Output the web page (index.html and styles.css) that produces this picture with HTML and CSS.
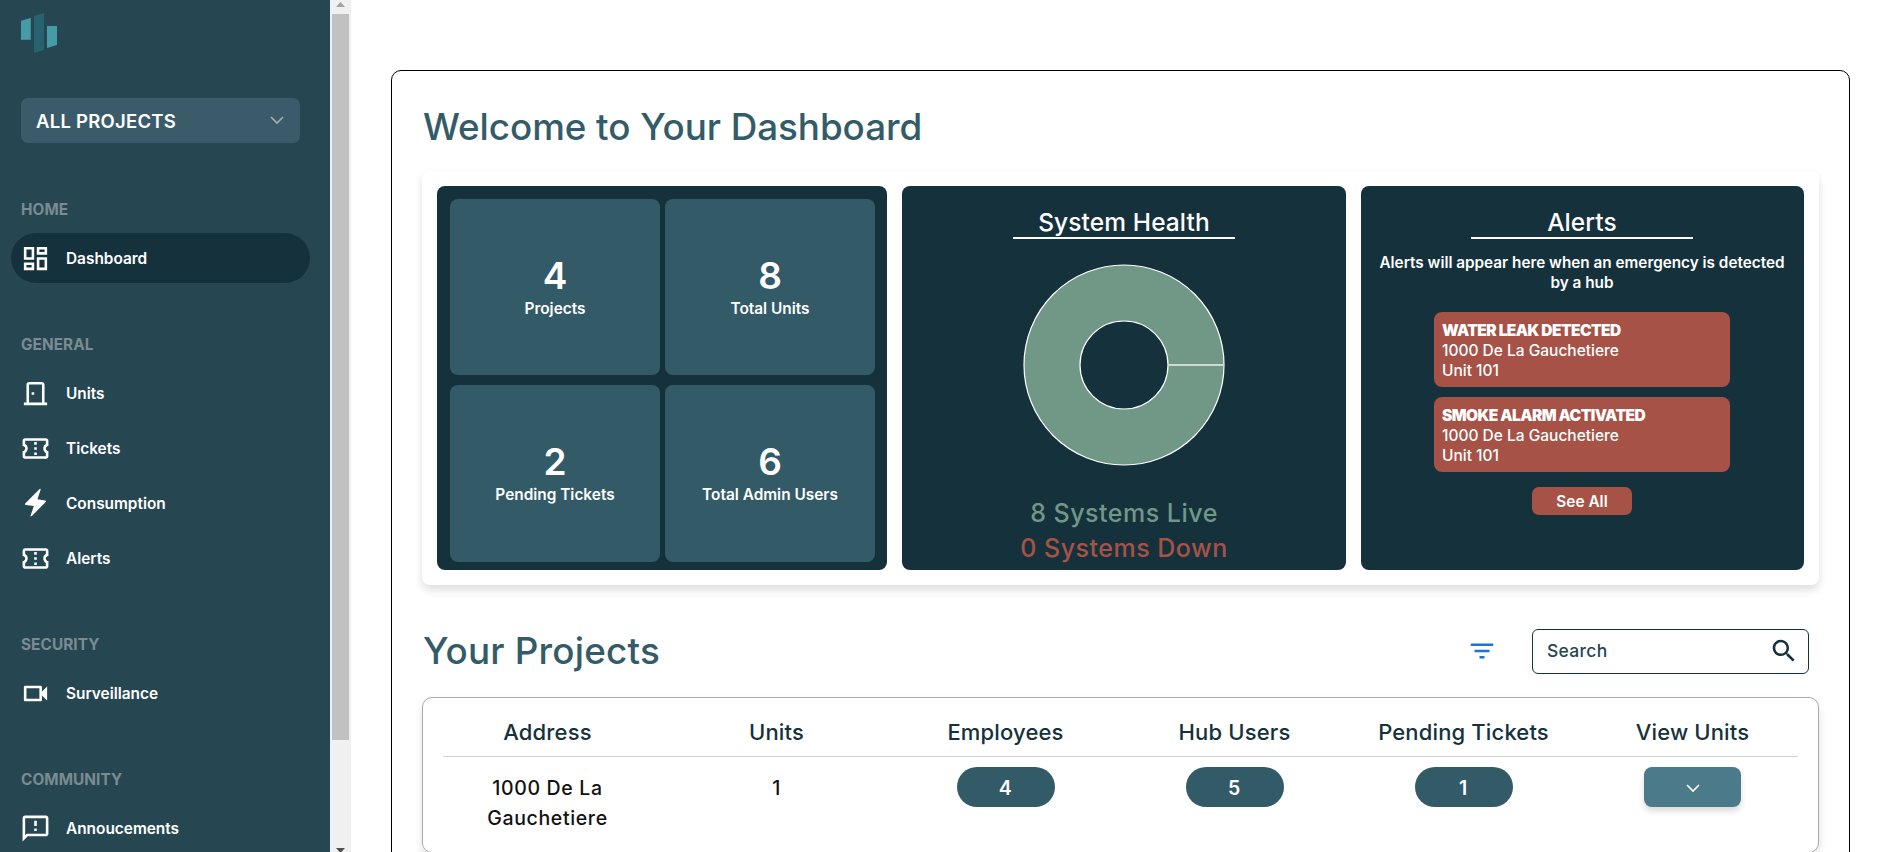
FILE: index.html
```html
<!DOCTYPE html>
<html lang="en">
<head>
<meta charset="utf-8">
<title>Dashboard</title>
<link rel="stylesheet" href="styles.css">
</head>
<body>
<div class="app">
  <aside class="sidebar">
    <svg class="logo" width="36" height="40" viewBox="0 0 36 40">
      <path fill="#469ca6" d="M0 7.7 9.8 5v21.7H0z"/>
      <path fill="#27626f" d="M13 3 23 0v36.7L13 40z"/>
      <path fill="#469ca6" d="M26 13h10v19l-10 3z"/>
    </svg>
    <div class="select">
      <span>ALL PROJECTS</span>
      <svg width="14" height="9" viewBox="0 0 14 9"><path d="M1 1l6 6 6-6" fill="none" stroke="#a3adb5" stroke-width="1.7"/></svg>
    </div>
    <nav class="nav">
      <section class="group">
        <h4>HOME</h4>
        <a class="item active"><svg viewBox="0 0 24 24"><path d="M19 5v2h-4V5h4M9 5v6H5V5h4m10 8v6h-4v-6h4M9 17v2H5v-2h4M21 3h-8v6h8V3zM11 3H3v10h8V3zm10 8h-8v10h8V11zm-10 4H3v6h8v-6z"/></svg>Dashboard</a>
      </section>
      <section class="group">
        <h4>GENERAL</h4>
        <a class="item"><svg viewBox="0 0 24 24"><path d="M19 19V5c0-1.1-.9-2-2-2H7c-1.1 0-2 .9-2 2v14H3v2h18v-2h-2zm-2 0H7V5h10v14zm-8-8h2v2H9z"/></svg>Units</a>
        <a class="item"><svg viewBox="0 0 24 24"><path d="M22 10V6c0-1.11-.9-2-2-2H4c-1.1 0-1.99.89-1.99 2v4c1.1 0 1.99.9 1.99 2s-.89 2-2 2v4c0 1.1.9 2 2 2h16c1.1 0 2-.9 2-2v-4c-1.1 0-2-.9-2-2s.9-2 2-2zm-2-1.46c-1.19.69-2 1.99-2 3.46s.81 2.77 2 3.46V18H4v-2.54c1.19-.69 2-1.99 2-3.46 0-1.48-.8-2.77-1.99-3.46L4 6h16v2.54zM11 15h2v2h-2zm0-4h2v2h-2zm0-4h2v2h-2z"/></svg>Tickets</a>
        <a class="item"><svg viewBox="0 0 24 24"><path d="M15.2 .8Q16.300 .300 15.900 1.500L13.500 8.700 19.500 9.700Q20.600 10 19.900 10.900L9.200 21.600Q7.800 22.600 8.300 21L10.700 14 4.500 13.200Q3.300 12.800 4.200 11.800z"/></svg>Consumption</a>
        <a class="item"><svg viewBox="0 0 24 24"><path d="M22 10V6c0-1.11-.9-2-2-2H4c-1.1 0-1.99.89-1.99 2v4c1.1 0 1.99.9 1.99 2s-.89 2-2 2v4c0 1.1.9 2 2 2h16c1.1 0 2-.9 2-2v-4c-1.1 0-2-.9-2-2s.9-2 2-2zm-2-1.46c-1.19.69-2 1.99-2 3.46s.81 2.77 2 3.46V18H4v-2.54c1.19-.69 2-1.99 2-3.46 0-1.48-.8-2.77-1.99-3.46L4 6h16v2.54zM11 15h2v2h-2zm0-4h2v2h-2zm0-4h2v2h-2z"/></svg>Alerts</a>
      </section>
      <section class="group">
        <h4>SECURITY</h4>
        <a class="item"><svg viewBox="0 0 24 24"><path d="M15 8v8H5V8h10m1-2H4c-.55 0-1 .45-1 1v10c0 .55.45 1 1 1h12c.55 0 1-.45 1-1v-3.5l4 4v-11l-4 4V7c0-.55-.45-1-1-1z"/></svg>Surveillance</a>
      </section>
      <section class="group">
        <h4>COMMUNITY</h4>
        <a class="item"><svg viewBox="0 0 24 24"><path d="M20 2H4c-1.1 0-1.99.9-1.99 2L2 22l4-4h14c1.1 0 2-.9 2-2V4c0-1.1-.9-2-2-2zm0 14H5.17L4 17.17V4h16v12zm-9-4h2v2h-2zm0-6h2v4h-2z"/></svg>Annoucements</a>
      </section>
    </nav>
  </aside>
  <div class="scrollbar">
    <svg width="9" height="5" viewBox="0 0 9 5"><path d="M4.5 0 9 5H0z" fill="#a3a3a3"/></svg>
    <div class="thumb"></div>
    <svg width="9" height="5" viewBox="0 0 9 5"><path d="M0 0h9L4.5 5z" fill="#505050"/></svg>
  </div>
  <main class="main">
    <div class="page">
      <h1>Welcome to Your Dashboard</h1>
      <div class="overview">
        <div class="panel tiles">
          <div class="tile"><b>4</b><span>Projects</span></div>
          <div class="tile"><b>8</b><span>Total Units</span></div>
          <div class="tile"><b>2</b><span>Pending Tickets</span></div>
          <div class="tile"><b>6</b><span>Total Admin Users</span></div>
        </div>
        <div class="panel">
          <h2>System Health</h2>
          <svg class="donut" width="202" height="202" viewBox="-101 -101 202 202">
            <circle r="72" fill="none" stroke="#719887" stroke-width="56"/>
            <circle r="100" fill="none" stroke="#fff" stroke-width="1.2"/>
            <circle r="44" fill="none" stroke="#fff" stroke-width="1.2"/>
            <path d="M44 0h56" stroke="#cfdcd6" stroke-width="2"/>
          </svg>
          <p class="stat live">8 Systems Live</p>
          <p class="stat dead">0 Systems Down</p>
        </div>
        <div class="panel alerts">
          <h2>Alerts</h2>
          <p class="note">Alerts will appear here when an emergency is detected by a hub</p>
          <div class="alert"><strong>WATER LEAK DETECTED</strong><span>1000 De La Gauchetiere</span><span>Unit 101</span></div>
          <div class="alert"><strong>SMOKE ALARM ACTIVATED</strong><span>1000 De La Gauchetiere</span><span>Unit 101</span></div>
          <div class="see-all">See All</div>
        </div>
      </div>
      <div class="projects-bar">
        <h1>Your Projects</h1>
        <svg class="filter" width="30" height="30" viewBox="0 0 24 24"><path fill="#1976d2" d="M10 18h4v-2h-4v2zM3 6v2h18V6H3zm3 7h12v-2H6v2z"/></svg>
        <div class="search">
          <span>Search</span>
          <svg width="30" height="30" viewBox="0 0 24 24"><path fill="#15323c" d="M15.5 14h-.79l-.28-.27C15.41 12.59 16 11.11 16 9.5 16 5.91 13.09 3 9.5 3S3 5.91 3 9.5 5.91 16 9.5 16c1.61 0 3.09-.59 4.23-1.57l.27.28v.79l5 4.99L20.49 19l-4.99-5zm-6 0C7.01 14 5 11.99 5 9.5S7.01 5 9.5 5 14 7.01 14 9.5 11.99 14 9.5 14z"/></svg>
        </div>
      </div>
      <div class="table">
        <div class="row head">
          <span>Address</span><span>Units</span><span>Employees</span><span>Hub Users</span><span>Pending Tickets</span><span>View Units</span>
        </div>
        <hr>
        <div class="row body">
          <div class="address">1000 De La Gauchetiere</div>
          <div class="count">1</div>
          <div class="pill">4</div>
          <div class="pill">5</div>
          <div class="pill">1</div>
          <div class="expand"><svg width="14" height="9" viewBox="0 0 14 9"><path d="M1 1l6 6 6-6" fill="none" stroke="#fff" stroke-width="1.7"/></svg></div>
        </div>
      </div>
    </div>
  </main>
</div>
</body>
</html>
```
FILE: styles.css
```css
* { box-sizing: border-box; margin: 0; padding: 0; }
body {
  height: 852px;
  overflow: hidden;
  background: #fff;
  font: 600 15.4px/20px Inter, "Liberation Sans", sans-serif;
}
.app { display: flex; height: 852px; overflow: hidden; }

/* Sidebar */
.sidebar { flex: none; width: 330px; height: 852px; overflow: hidden; background: #264752; color: #fff; padding: 13px 11px 0; }
.logo { display: block; margin-left: 10px; }
.select {
  display: flex; align-items: center; justify-content: space-between;
  width: 279px; height: 45px; margin: 45px 0 0 10px; padding: 0 16px 0 15px;
  background: #3b5b6a; border-radius: 7px;
  font-size: 18.5px; letter-spacing: .25px;
}
.nav { display: flex; flex-direction: column; gap: 49px; margin-top: 54px; }
.group { display: flex; flex-direction: column; gap: 5px; }
.group h4 { height: 24px; margin: 0 0 7px 10px; line-height: 25px; font-size: 15.3px; font-weight: 700; letter-spacing: .1px; color: #7b8b91; }
.item { display: flex; align-items: center; gap: 15px; width: 299px; height: 50px; padding: 1px 0 0 9px; border-radius: 25px; }
.item svg { width: 31px; height: 31px; fill: #fff; }
.active { background: #15323c; }

.scrollbar { flex: none; display: flex; flex-direction: column; align-items: center; width: 21px; height: 852px; overflow: hidden; background: #f0f0f0; padding-top: 2px; }
.scrollbar svg { flex: none; }
.thumb { flex: none; width: 17px; height: 726px; margin: 7px 0 108px; background: #c1c1c1; }

/* Content */
.main { flex: 1; padding: 70px 35px 0 40px; }
.page { height: 900px; border: 1px solid #000; border-radius: 10px; padding: 36px 30px 0; }
h1 { padding-left: 1px; font-size: 36.8px; line-height: 40px; font-weight: 500; letter-spacing: -.05px; color: #335b68; }
.overview {
  display: grid; grid-template-columns: 450px 444px 443px; gap: 15px;
  height: 414px; margin-top: 24px; padding: 15px;
  border-radius: 8px; box-shadow: 0 5px 8px rgba(0, 0, 0, .13);
}
.panel { display: flex; flex-direction: column; align-items: center; padding-top: 20px; background: #15323c; border-radius: 8px; color: #fff; }
.alerts { padding-right: 1px; }
.tiles { display: grid; align-items: stretch; grid-template-columns: 210px 210px; grid-template-rows: 176px 177px; gap: 10px 5px; padding: 13px 12px 8px 13px; }
.tile { display: flex; flex-direction: column; align-items: center; justify-content: center; padding-top: 2px; background: #335a67; border-radius: 8px; }
.tile b { font-size: 37px; line-height: 40px; font-weight: 600; }
.tile span { line-height: 25px; }
h2 { width: 222px; height: 33px; border-bottom: 2px solid #fff; text-align: center; font-size: 24.5px; line-height: 33px; font-weight: 500; letter-spacing: .1px; }
.donut { margin: 25px 0 30px; }
.stat { font-size: 25px; line-height: 35px; font-weight: 500; letter-spacing: .5px; }
.live { color: #719887; }
.dead { color: #a65247; }
.note { width: 413px; margin: 14px 0 9px; text-align: center; font-size: 15.3px; }
.alert { display: flex; flex-direction: column; width: 296px; height: 75px; margin-top: 10px; padding: 9px 8px 0; background: #a65247; border-radius: 8px; font-size: 15.5px; font-weight: 550; }
.alert strong { font-weight: 900; letter-spacing: -.55px; }
.see-all { width: 100px; height: 28px; margin-top: 15px; line-height: 29px; text-align: center; background: #a65247; border-radius: 7px; }

.projects-bar { display: flex; align-items: center; margin-top: 44px; padding-right: 10px; height: 45px; }
.projects-bar h1 { padding-bottom: 1px; height: 42px; letter-spacing: .2px; }
.filter { margin-left: auto; margin-right: 35px; margin-bottom: 1px; }
.search { display: flex; align-items: center; justify-content: space-between; width: 277px; height: 45px; padding: 0 9px 2px 14px; border: 1px solid #15323c; border-radius: 6px; font-size: 17.5px; font-weight: 500; letter-spacing: .3px; color: #264752; }

.table { height: 156px; margin-top: 23px; padding: 0 11px 0 10px; border: 1px solid #aaa; border-radius: 10px; box-shadow: 0 5px 8px rgba(0, 0, 0, .12); }
.row { display: grid; grid-template-columns: repeat(6, 1fr); justify-items: center; }
.head { height: 58px; font-size: 22px; font-weight: 500; line-height: 69px; letter-spacing: .15px; color: #15323c; }
.table hr { height: 1px; margin: 0 9px 0 10px; border: 0; background: #d1d5db; }
.body { padding-top: 10px; font-size: 19.5px; font-weight: 500; line-height: 30px; letter-spacing: .65px; color: #111; }
.address { width: 150px; padding-top: 6px; text-align: center; }
.count { padding-top: 6px; }
.pill { width: 98px; height: 40px; line-height: 42px; text-align: center; font-weight: 600; color: #fff; background: #335a67; border-radius: 20px; }
.expand { display: flex; align-items: center; justify-content: center; width: 97px; height: 40px; padding-top: 3px; background: #4b7b8a; border-radius: 8px; box-shadow: 0 4px 6px rgba(0, 0, 0, .15); }
```
